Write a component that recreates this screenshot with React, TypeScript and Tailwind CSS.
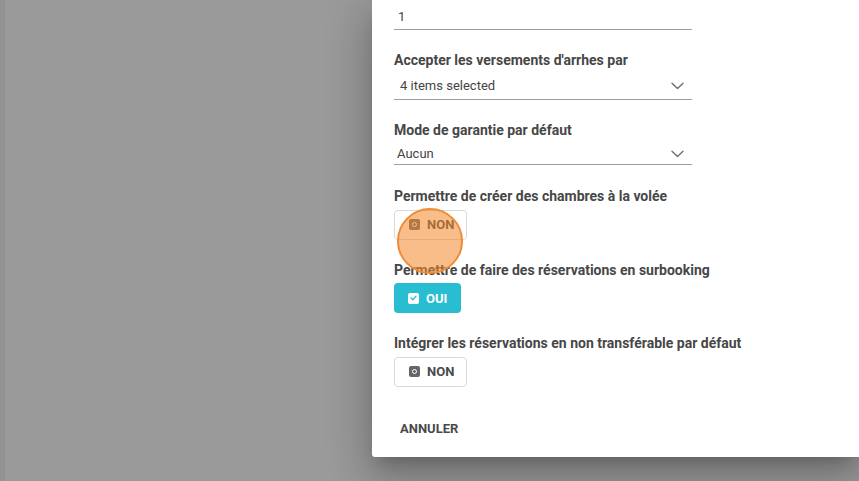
import React from "react";

const Label = ({ children, className = "" }: { children: React.ReactNode; className?: string }) => (
  <div className={`h-5 leading-5 text-[14px] font-bold text-[#474747] whitespace-nowrap ${className}`}>{children}</div>
);

const Chevron = () => (
  <svg width="13" height="8" viewBox="0 0 13 8" fill="none" className="mr-[8px]">
    <path d="M1 1.2l5.5 5.3 5.5-5.3" stroke="#6b6b6b" strokeWidth="1.3" strokeLinecap="round" strokeLinejoin="round" />
  </svg>
);

const NonButton = () => (
  <div className="mt-[3.5px] h-[30px] w-[73px] rounded-[4px] border border-[#d9d9d9] bg-white flex items-center pl-[14px] gap-[7px]">
    <span className="w-[11px] h-[11px] rounded-[2px] bg-[#666666] flex items-center justify-center">
      <span className="w-[5px] h-[5px] rounded-full border-[1.3px] border-white" />
    </span>
    <span className="text-[13px] font-bold text-[#4a4a4a] leading-none">NON</span>
  </div>
);

const OuiButton = () => (
  <div className="mt-[3.5px] h-[30px] w-[67px] rounded-[4px] bg-[#29bdd1] flex items-center pl-[14px] gap-[7px]">
    <span className="w-[11px] h-[11px] rounded-[2px] bg-white flex items-center justify-center">
      <svg width="7" height="6" viewBox="0 0 7 6" fill="none">
        <path d="M1 3l1.8 1.7L6 1.2" stroke="#29bdd1" strokeWidth="1.3" strokeLinecap="round" strokeLinejoin="round" />
      </svg>
    </span>
    <span className="text-[13px] font-bold text-white leading-none">OUI</span>
  </div>
);

export default function App() {
  return (
    <div
      className="relative w-[859px] h-[481px] overflow-hidden bg-[#9a9a9a] flex"
      style={{ fontFamily: "Roboto, 'Liberation Sans', sans-serif" }}
    >
      <div className="w-[5px] h-full bg-[#939393]" />
      <div className="flex-1" />
      <div className="self-start w-[487px] bg-white rounded-bl-[3px] pl-[22px] pb-[10px] shadow-[0_11px_15px_-7px_rgba(0,0,0,0.2),0_24px_38px_3px_rgba(0,0,0,0.14),0_9px_46px_8px_rgba(0,0,0,0.12)]">
        <Label className="-mt-[19px]">Nombre de jours requis pour le paiement de l'acompte (jours)</Label>
        <div className="mt-[3px] w-[298px] h-[26px] border-b border-[#9e9e9e] flex items-center pl-[4px] text-[13px] text-[#444]">1</div>

        <Label className="mt-[20px]">Accepter les versements d'arrhes par</Label>
        <div className="w-[298px] h-[30px] border-b border-[#9e9e9e] flex items-center justify-between pl-[6px] pt-[2px] text-[13px] text-[#444]">
          <span>4 items selected</span>
          <Chevron />
        </div>

        <Label className="mt-[20px]">Mode de garantie par défaut</Label>
        <div className="w-[298px] h-[25px] border-b border-[#9e9e9e] flex items-center justify-between pl-[3px] pt-[3px] text-[13px] text-[#444]">
          <span>Aucun</span>
          <Chevron />
        </div>

        <Label className="mt-[21px]">Permettre de créer des chambres à la volée</Label>
        <NonButton />

        <Label className="mt-[20px]">Permettre de faire des réservations en surbooking</Label>
        <OuiButton />

        <Label className="mt-[20px]">Intégrer les réservations en non transférable par défaut</Label>
        <NonButton />

        <div className="mt-[24px] h-[36px] flex items-center px-[6px] text-[13px] font-bold text-[#4a4a4a]">ANNULER</div>
      </div>

      <div className="absolute left-[397px] top-[208px] w-[66px] h-[66px] rounded-full border-[2.5px] border-[#f08c38] bg-[rgba(242,135,40,0.55)]" />
    </div>
  );
}
